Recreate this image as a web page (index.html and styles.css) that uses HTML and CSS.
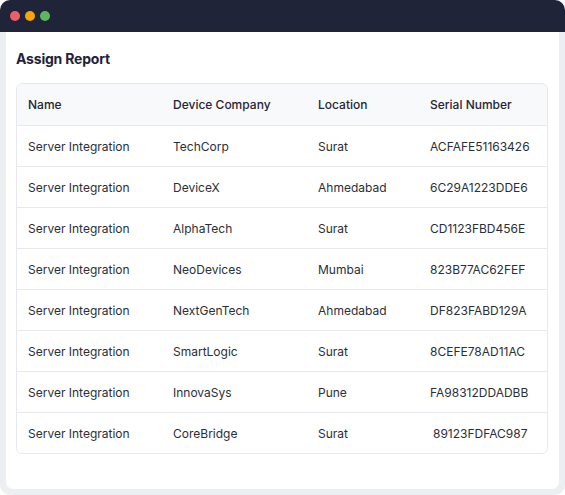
FILE: index.html
```html
<!DOCTYPE html>
<html lang="en">
<head>
<meta charset="utf-8">
<title>Assign Report</title>
<link rel="stylesheet" href="styles.css">
</head>
<body>
<div class="window">
  <div class="titlebar">
    <span class="dot dot-red"></span>
    <span class="dot dot-orange"></span>
    <span class="dot dot-green"></span>
  </div>
  <div class="frame">
    <div class="panel">
      <h2 class="title">Assign Report</h2>
      <div class="table-wrap">
        <table class="report">
          <thead>
            <tr><th class="c-name">Name</th><th class="c-company">Device Company</th><th class="c-loc">Location</th><th class="c-serial">Serial Number</th></tr>
          </thead>
          <tbody>
            <tr><td>Server Integration</td><td>TechCorp</td><td>Surat</td><td>ACFAFE51163426</td></tr>
            <tr><td>Server Integration</td><td>DeviceX</td><td>Ahmedabad</td><td>6C29A1223DDE6</td></tr>
            <tr><td>Server Integration</td><td>AlphaTech</td><td>Surat</td><td>CD1123FBD456E</td></tr>
            <tr><td>Server Integration</td><td>NeoDevices</td><td>Mumbai</td><td>823B77AC62FEF</td></tr>
            <tr><td>Server Integration</td><td>NextGenTech</td><td>Ahmedabad</td><td>DF823FABD129A</td></tr>
            <tr><td>Server Integration</td><td>SmartLogic</td><td>Surat</td><td>8CEFE78AD11AC</td></tr>
            <tr><td>Server Integration</td><td>InnovaSys</td><td>Pune</td><td>FA98312DDADBB</td></tr>
            <tr><td>Server Integration</td><td>CoreBridge</td><td>Surat</td><td class="indent">89123FDFAC987</td></tr>
          </tbody>
        </table>
      </div>
    </div>
  </div>
</div>
</body>
</html>
```
FILE: styles.css
```css
* { box-sizing: border-box; }
html, body { margin: 0; padding: 0; background: #ffffff; }
body { font-family: Inter, "Noto Sans", sans-serif; color: #2a2e39; }

.window {
  width: 565px;
  height: 495px;
  display: flex;
  flex-direction: column;
}
.titlebar {
  height: 32px;
  flex: none;
  background: #1f2438;
  border-radius: 10px 10px 0 0;
  display: flex;
  align-items: center;
  gap: 5px;
  padding-left: 10px;
}
.dot { width: 10px; height: 10px; border-radius: 50%; display: block; }
.dot-red { background: #ef5f67; }
.dot-orange { background: #f7a30a; }
.dot-green { background: #5cb85c; }

.frame {
  flex: 1;
  background: #eceef2;
  padding: 0 6px 6px 6px;
  border-radius: 0 0 10px 10px;
  display: flex;
}
.panel {
  flex: 1;
  background: #ffffff;
  border-radius: 0 0 7px 7px;
  padding: 19px 11px 0 10px;
}
.title {
  margin: 0 0 16px 0;
  font-size: 14px;
  font-weight: 700;
  color: #1f2437;
  line-height: 16px;
  letter-spacing: -0.2px;
}
.table-wrap {
  width: 532px;
  border: 1px solid #e7e9ee;
  border-radius: 6px;
  overflow: hidden;
}
.report {
  width: 100%;
  border-collapse: collapse;
  table-layout: fixed;
  font-size: 12px;
}
.report th, .report td {
  text-align: left;
  padding: 0 11px;
  white-space: nowrap;
}
.report th {
  height: 41px;
  background: #f8f9fb;
  font-weight: 500;
  color: #1f2437;
}
.report td {
  height: 41px;
  padding-top: 2px;
  border-top: 1px solid #e7e9ee;
  color: #2a2e39;
  font-weight: 400;
}
.c-name { width: 145px; }
.c-company { width: 145px; }
.c-loc { width: 112px; }
.c-serial { width: 130px; }
.report td.indent { padding-left: 14px; }
```
